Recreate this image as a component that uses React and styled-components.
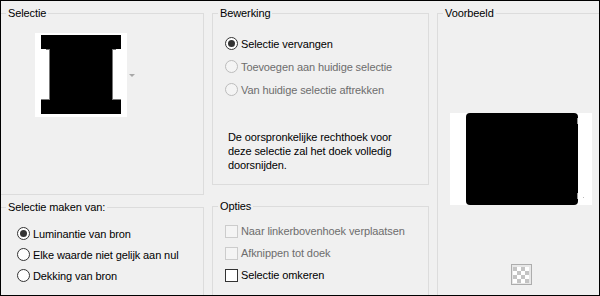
import React from "react";
import styled, { createGlobalStyle } from "styled-components";

const GlobalStyle = createGlobalStyle`
  html, body { margin: 0; padding: 0; background: #f0f0f0; }
  body {
    font-family: "Liberation Sans", Arial, sans-serif;
    font-size: 11px;
    letter-spacing: -0.1px;
    color: #000;
  }
`;

//#region styled components
const Frame = styled.div`
  width: 600px;
  height: 296px;
  box-sizing: border-box;
  border: 1px solid #000;
  background: #f0f0f0;
  overflow: hidden;
`;
const Columns = styled.div`
  display: grid;
  grid-template-columns: 204px 217px 168px;
  column-gap: 8px;
  margin: 5px 0 0 -1px;
  width: max-content;
`;
const Column = styled.div`
  display: flex;
  flex-direction: column;
`;
const GroupBox = styled.fieldset`
  box-sizing: border-box;
  margin: ${p => p.$top || 0}px 0 0 0;
  padding: 0;
  min-width: 0;
  height: ${p => p.$height}px;
  border: 1px solid #dcdcdc;
`;
const Legend = styled.legend`
  margin-left: 5px;
  padding: 0 2px;
  line-height: 14px;
  font-size: 11px;
  color: #000;
`;
const Body = styled.div`
  display: flex;
  flex-direction: column;
  padding: ${p => p.$pad};
`;
const ThumbRow = styled.div`
  display: flex;
  align-items: center;
  gap: 2px;
`;
const Option = styled.label`
  display: flex;
  align-items: center;
  height: ${p => p.$h}px;
  gap: 3px;
  color: ${p => (p.$disabled ? "#6d6d6d" : "#000")};
  white-space: nowrap;
`;
const RadioDot = styled.span`
  position: relative;
  flex: none;
  width: 13px;
  height: 13px;
  box-sizing: border-box;
  border-radius: 50%;
  border: 1px solid ${p => (p.$disabled ? "#bcbcbc" : "#333")};
  background: ${p => (p.$disabled ? "#f4f4f4" : "#fff")};
  &::after {
    content: "";
    display: ${p => (p.$checked ? "block" : "none")};
    position: absolute;
    inset: 2px;
    border-radius: 50%;
    background: #333;
  }
`;
const CheckBox = styled.span`
  flex: none;
  width: 13px;
  height: 13px;
  box-sizing: border-box;
  border: 1px solid ${p => (p.$disabled ? "#cccccc" : "#333")};
  background: ${p => (p.$disabled ? "#f4f4f4" : "#fff")};
`;
const Note = styled.p`
  margin: 29px 0 0 3px;
  line-height: 14px;
  white-space: nowrap;
`;
const Preview = styled.div`
  display: flex;
  flex-direction: column;
  align-items: center;
  padding-top: 93px;
`;
const CheckerButton = styled.div`
  margin-top: 59px;
  width: 21px;
  height: 21px;
  box-sizing: border-box;
  border: 1px solid #adadad;
  display: flex;
  align-items: center;
  justify-content: center;
  background: #e8e8e8;
`;
//#endregion

const SelectionThumb = () => (
  <svg width="92" height="84" viewBox="0 0 92 84">
    <rect width="92" height="84" fill="#fff" />
    <rect x="6" y="2" width="80" height="14" fill="#000" />
    <rect x="14" y="16" width="64" height="51" fill="#000" />
    <rect x="6" y="67" width="80" height="14" fill="#000" />
    <rect x="14" y="16" width="1" height="51" fill="#777" />
    <rect x="77" y="16" width="1" height="51" fill="#777" />
    <rect x="11" y="16" width="4" height="1" fill="#777" />
    <rect x="77" y="16" width="4" height="1" fill="#777" />
    <rect x="6" y="66" width="9" height="1" fill="#777" />
    <rect x="77" y="66" width="9" height="1" fill="#777" />
  </svg>
);

const DropArrow = () => (
  <svg width="6" height="3" viewBox="0 0 6 3">
    <path d="M0 0h6L3 3z" fill="#a8a8a8" />
  </svg>
);

const PreviewImage = () => (
  <svg width="142" height="92" viewBox="0 0 142 92">
    <rect width="142" height="92" fill="#fff" />
    <rect x="16" y="0" width="112" height="92" rx="4" fill="#000" />
    <rect x="127" y="5" width="1" height="6" fill="#999" />
    <rect x="127" y="80" width="1" height="6" fill="#999" />
    <rect x="133" y="84" width="1" height="1" fill="#bbb" />
  </svg>
);

const Checker = () => (
  <svg width="16" height="16" viewBox="0 0 16 16">
    <rect width="16" height="16" fill="#fff" />
    {[0, 1, 2, 3].map(r =>
      [0, 1, 2, 3].map(c =>
        (r + c) % 2 === 0 ? (
          <rect key={r + "-" + c} x={c * 4} y={r * 4} width="4" height="4" fill="#c4c4c4" />
        ) : null
      )
    )}
  </svg>
);

const Radio = ({ label, checked, disabled, h }) => (
  <Option $disabled={disabled} $h={h}>
    <RadioDot $checked={checked} $disabled={disabled} />
    {label}
  </Option>
);

const Check = ({ label, disabled, h }) => (
  <Option $disabled={disabled} $h={h}>
    <CheckBox $disabled={disabled} />
    {label}
  </Option>
);

export default function App() {
  return (
    <>
      <GlobalStyle />
      <Frame>
        <Columns>
          <Column>
            <GroupBox $height={189}>
              <Legend>Selectie</Legend>
              <Body $pad="13px 0 0 34px">
                <ThumbRow>
                  <SelectionThumb />
                  <DropArrow />
                </ThumbRow>
              </Body>
            </GroupBox>
            <GroupBox $height={120} $top={5}>
              <Legend>Selectie maken van:</Legend>
              <Body $pad="9px 0 0 16px">
                <Radio h={21} checked label="Luminantie van bron" />
                <Radio h={21} label="Elke waarde niet gelijk aan nul" />
                <Radio h={21} label="Dekking van bron" />
              </Body>
            </GroupBox>
          </Column>

          <Column>
            <GroupBox $height={179}>
              <Legend>Bewerking</Legend>
              <Body $pad="12px 0 0 12px">
                <Radio h={23} checked label="Selectie vervangen" />
                <Radio h={23} disabled label="Toevoegen aan huidige selectie" />
                <Radio h={23} disabled label="Van huidige selectie aftrekken" />
                <Note>
                  De oorspronkelijke rechthoek voor
                  <br />
                  deze selectie zal het doek volledig
                  <br />
                  doorsnijden.
                </Note>
              </Body>
            </GroupBox>
            <GroupBox $height={120} $top={14}>
              <Legend>Opties</Legend>
              <Body $pad="7px 0 0 12px">
                <Check h={22} disabled label="Naar linkerbovenhoek verplaatsen" />
                <Check h={22} disabled label="Afknippen tot doek" />
                <Check h={22} label="Selectie omkeren" />
              </Body>
            </GroupBox>
          </Column>

          <Column>
            <GroupBox $height={320}>
              <Legend>Voorbeeld</Legend>
              <Preview>
                <PreviewImage />
                <CheckerButton>
                  <Checker />
                </CheckerButton>
              </Preview>
            </GroupBox>
          </Column>
        </Columns>
      </Frame>
    </>
  );
}
